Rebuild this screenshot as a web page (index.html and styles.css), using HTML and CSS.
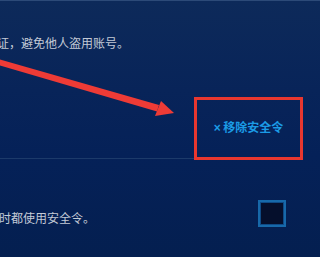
FILE: index.html
```html
<!DOCTYPE html>
<html lang="zh-CN">
<head>
<meta charset="utf-8">
<link rel="stylesheet" href="styles.css">
</head>
<body>
<div class="page">
  <div class="top-line"></div>
  <section class="sec sec-first">
    <p class="desc">证，避免他人盗用账号。</p>
    <div class="action-row">
      <div class="highlight">
        <button class="remove-btn"><span class="x">×</span> 移除安全令</button>
      </div>
    </div>
  </section>
  <div class="divider"></div>
  <section class="sec sec-second">
    <div class="opt-row">
      <p class="desc desc-2">时都使用安全令。</p>
      <span class="checkbox"></span>
    </div>
  </section>
  <svg class="arrow" width="320" height="257" viewBox="0 0 320 257">
    <polygon points="-2,59 -2,65 157,111.5 159,105" fill="#ee3b36"/>
    <polygon points="174,113 161,101 155,116" fill="#ee3b36"/>
  </svg>
</div>
</body>
</html>
```
FILE: styles.css
```css
* { box-sizing: border-box; }
html, body { margin: 0; padding: 0; }
body { background: #041f50; }
.page {
  position: relative;
  width: 320px;
  height: 257px;
  overflow: hidden;
  background: linear-gradient(180deg, #0d2a5a 0%, #082459 35%, #052158 60%, #041f50 100%);
  font-family: "Noto Sans CJK SC", "Noto Sans", sans-serif;
}
.top-line { height: 1px; background: #2c4a78; }
.sec-first { height: 157px; display: flex; flex-direction: column; }
.desc {
  margin: 34px 0 0 -3px;
  font-size: 12px;
  line-height: 16px;
  color: #c3cad6;
  white-space: nowrap;
}
.action-row {
  margin-top: 46px;
  display: flex;
  justify-content: flex-end;
  padding-right: 17px;
}
.highlight {
  position: relative;
  z-index: 1;
  width: 109px;
  height: 63px;
  margin-bottom: -2px;
  border: 3px solid #e8372f;
  display: flex;
  align-items: center;
  justify-content: center;
}
.remove-btn {
  background: none;
  border: 0;
  padding: 0;
  margin-top: -3px;
  font-family: inherit;
  font-size: 12px;
  font-weight: 700;
  line-height: 16px;
  color: #1b9be6;
  white-space: nowrap;
}
.remove-btn .x { font-family: "Liberation Sans", sans-serif; font-size: 12px; }
.divider { width: 200px; height: 1px; background: #1c3a6a; }
.opt-row {
  display: flex;
  justify-content: space-between;
  align-items: flex-start;
  padding: 41px 34px 0 0;
}
.desc-2 { margin: 10px 0 0 -1px; }
.checkbox {
  width: 28px;
  height: 27px;
  border: 2px solid #1769aa;
  box-shadow: inset 0 0 0 1px #0f4a85;
  background: #050f2c;
}
.arrow { position: absolute; left: 0; top: 0; pointer-events: none; }
```
